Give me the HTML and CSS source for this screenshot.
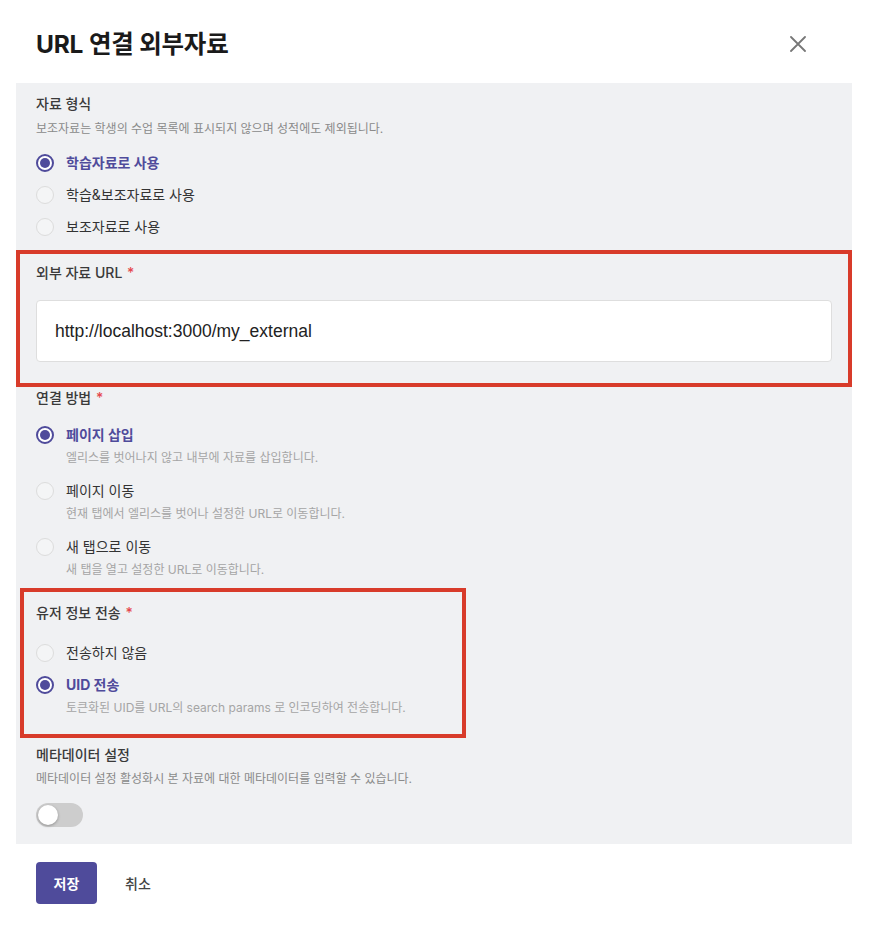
FILE: index.html
```html
<!DOCTYPE html>
<html lang="ko">
<head>
<meta charset="utf-8">
<title>URL 연결 외부자료</title>
<link rel="stylesheet" href="styles.css">
</head>
<body>
<div class="modal">
  <header class="modal-header">
    <h1 class="modal-title">URL 연결 외부자료</h1>
    <button class="close-btn" aria-label="닫기">
      <svg width="16" height="16" viewBox="0 0 16 16"><path d="M1 1 L15 15 M15 1 L1 15" stroke="#777" stroke-width="1.8" stroke-linecap="round" fill="none"/></svg>
    </button>
  </header>

  <div class="panel">
    <section class="field field-type">
      <div class="field-label">자료 형식</div>
      <div class="field-desc">보조자료는 학생의 수업 목록에 표시되지 않으며 성적에도 제외됩니다.</div>
      <div class="options options-simple">
        <label class="option checked"><span class="radio"></span><span class="opt-text">학습자료로 사용</span></label>
        <label class="option"><span class="radio"></span><span class="opt-text">학습&amp;보조자료로 사용</span></label>
        <label class="option"><span class="radio"></span><span class="opt-text">보조자료로 사용</span></label>
      </div>
    </section>

    <section class="field field-url">
      <div class="field-label">외부 자료 URL <span class="req">*</span></div>
      <div class="input">http://localhost:3000/my_external</div>
    </section>

    <section class="field field-method">
      <div class="field-label">연결 방법 <span class="req">*</span></div>
      <div class="options options-desc">
        <div class="opt-block">
          <label class="option checked"><span class="radio"></span><span class="opt-text">페이지 삽입</span></label>
          <div class="opt-desc">엘리스를 벗어나지 않고 내부에 자료를 삽입합니다.</div>
        </div>
        <div class="opt-block">
          <label class="option"><span class="radio"></span><span class="opt-text">페이지 이동</span></label>
          <div class="opt-desc">현재 탭에서 엘리스를 벗어나 설정한 URL로 이동합니다.</div>
        </div>
        <div class="opt-block">
          <label class="option"><span class="radio"></span><span class="opt-text">새 탭으로 이동</span></label>
          <div class="opt-desc">새 탭을 열고 설정한 URL로 이동합니다.</div>
        </div>
      </div>
    </section>

    <section class="field field-user">
      <div class="field-label">유저 정보 전송 <span class="req">*</span></div>
      <div class="options options-user">
        <label class="option"><span class="radio"></span><span class="opt-text">전송하지 않음</span></label>
        <div class="opt-block">
          <label class="option checked"><span class="radio"></span><span class="opt-text">UID 전송</span></label>
          <div class="opt-desc">토큰화된 UID를 URL의 search params 로 인코딩하여 전송합니다.</div>
        </div>
      </div>
    </section>

    <section class="field field-meta">
      <div class="field-label">메타데이터 설정</div>
      <div class="field-desc">메타데이터 설정 활성화시 본 자료에 대한 메타데이터를 입력할 수 있습니다.</div>
      <div class="toggle"><span class="knob"></span></div>
    </section>
  </div>

  <footer class="modal-footer">
    <button class="btn-primary">저장</button>
    <button class="btn-text">취소</button>
  </footer>
</div>

<div class="highlight highlight-url"></div>
<div class="highlight highlight-user"></div>
</body>
</html>
```

FILE: styles.css
```css
* { box-sizing: border-box; }

body {
  margin: 0;
  background: #ffffff;
  font-family: "Inter", "Noto Sans CJK KR", sans-serif;
  color: #333;
}

.modal {
  width: 884px;
}

.modal-header {
  display: flex;
  align-items: center;
  justify-content: space-between;
  height: 83px;
  padding: 5px 78px 0 36px;
}

.modal-title {
  margin: 0;
  font-size: 24.5px;
  font-weight: 700;
  line-height: 32px;
  color: #1a1a1a;
  letter-spacing: -0.2px;
}

.close-btn {
  border: 0;
  background: none;
  padding: 0;
  width: 16px;
  height: 16px;
  display: flex;
  cursor: pointer;
}

.panel {
  margin: 0 32px 0 16px;
  background: #f0f1f3;
  padding: 11px 20px 17px;
}

.field-label {
  font-size: 14px;
  line-height: 20px;
  font-weight: 500;
  color: #3a3a3a;
}

.req {
  color: #e5484d;
  margin-left: 1px;
}

.field-desc {
  margin-top: 6px;
  font-size: 12px;
  line-height: 18px;
  color: #8a8a8a;
}

.options-simple {
  margin-top: 9px;
  display: flex;
  flex-direction: column;
}

.options-simple .option {
  height: 32px;
}

.option {
  display: flex;
  align-items: center;
  height: 28px;
  gap: 12px;
  cursor: pointer;
}

.radio {
  width: 18px;
  height: 18px;
  border-radius: 50%;
  border: 1.5px solid #dcdcdc;
  background: #f4f5f6;
  flex: none;
  display: flex;
  align-items: center;
  justify-content: center;
}

.option.checked .radio {
  border: 2px solid #4f4b9b;
  background: #fff;
}

.option.checked .radio::after {
  content: "";
  width: 10px;
  height: 10px;
  border-radius: 50%;
  background: #4f4b9b;
}

.opt-text {
  font-size: 14px;
  line-height: 20px;
  color: #333;
}

.option.checked .opt-text {
  color: #4f4b9b;
  font-weight: 700;
}

.opt-desc {
  padding-left: 30px;
  font-size: 12px;
  line-height: 18px;
  color: #a5a5a5;
}

.field-url {
  margin-top: 20px;
}

.input {
  margin-top: 17px;
  height: 62px;
  background: #fff;
  border: 1px solid #dedede;
  border-radius: 4px;
  padding: 0 18px;
  display: flex;
  align-items: center;
  font-family: "Liberation Sans", "Noto Sans CJK KR", sans-serif;
  font-size: 17.5px;
  color: #222;
}

.field-method {
  margin-top: 26px;
}

.options-desc {
  margin-top: 13px;
  display: flex;
  flex-direction: column;
  gap: 10px;
}

.field-user {
  margin-top: 24px;
}

.options-user {
  margin-top: 16px;
  display: flex;
  flex-direction: column;
  gap: 4px;
}

.field-meta {
  margin-top: 28px;
}

.field-meta .field-desc {
  margin-top: 5px;
}

.toggle {
  margin-top: 15px;
  width: 47px;
  height: 24px;
  border-radius: 12px;
  background: #cdcdcd;
  padding: 2px;
  display: flex;
  align-items: center;
}

.knob {
  width: 20px;
  height: 20px;
  border-radius: 50%;
  background: #fff;
  box-shadow: 0 1px 3px rgba(0, 0, 0, 0.3);
}

.modal-footer {
  display: flex;
  align-items: center;
  gap: 14px;
  padding: 18px 36px;
}

.btn-primary {
  width: 61px;
  height: 42px;
  border: 0;
  border-radius: 4px;
  background: #4f4b9b;
  color: #fff;
  font-family: inherit;
  font-size: 14px;
  font-weight: 700;
  cursor: pointer;
}

.btn-text {
  border: 0;
  background: none;
  padding: 0 14px;
  font-family: inherit;
  font-size: 14px;
  font-weight: 500;
  color: #444;
  cursor: pointer;
}

.highlight {
  position: absolute;
  border: 4px solid #d83b2a;
  pointer-events: none;
}

.highlight-url {
  left: 16px;
  top: 250px;
  width: 836px;
  height: 137px;
}

.highlight-user {
  left: 20px;
  top: 588px;
  width: 446px;
  height: 150px;
}
```
